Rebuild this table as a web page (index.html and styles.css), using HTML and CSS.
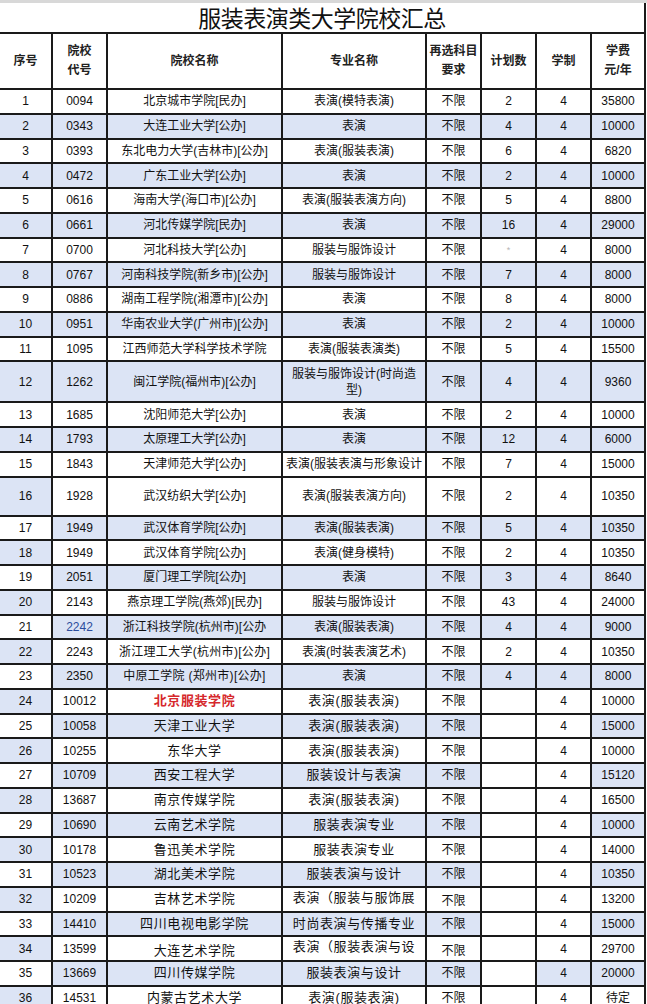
FILE: index.html
```html
<!DOCTYPE html>
<html lang="zh-CN">
<head>
<meta charset="utf-8">
<title>服装表演类大学院校汇总</title>
<link rel="stylesheet" href="styles.css">
</head>
<body>
<div class="band"></div>
<table class="sheet">
  <colgroup>
    <col class="c-seq"><col class="c-code"><col class="c-name"><col class="c-major">
    <col class="c-req"><col class="c-plan"><col class="c-dur"><col class="c-fee">
  </colgroup>
  <thead>
    <tr class="title"><th colspan="8">服装表演类大学院校汇总</th></tr>
    <tr class="head">
      <th>序号</th><th>院校<br>代号</th><th>院校名称</th><th>专业名称</th>
      <th>再选科目<br>要求</th><th>计划数</th><th>学制</th><th>学费<br>元/年</th>
    </tr>
  </thead>
  <tbody>
    <tr><td>1</td><td>0094</td><td>北京城市学院[民办]</td><td>表演(模特表演)</td><td>不限</td><td>2</td><td>4</td><td>35800</td></tr>
    <tr class="a"><td>2</td><td>0343</td><td>大连工业大学[公办]</td><td>表演</td><td>不限</td><td>4</td><td>4</td><td>10000</td></tr>
    <tr><td>3</td><td>0393</td><td>东北电力大学(吉林市)[公办]</td><td>表演(服装表演)</td><td>不限</td><td>6</td><td>4</td><td>6820</td></tr>
    <tr class="a"><td>4</td><td>0472</td><td>广东工业大学[公办]</td><td>表演</td><td>不限</td><td>2</td><td>4</td><td>10000</td></tr>
    <tr><td>5</td><td>0616</td><td>海南大学(海口市)[公办]</td><td>表演(服装表演方向)</td><td>不限</td><td>5</td><td>4</td><td>8800</td></tr>
    <tr class="a"><td>6</td><td>0661</td><td>河北传媒学院[民办]</td><td>表演</td><td>不限</td><td>16</td><td>4</td><td>29000</td></tr>
    <tr><td>7</td><td>0700</td><td>河北科技大学[公办]</td><td>服装与服饰设计</td><td>不限</td><td><span class="mark">*</span></td><td>4</td><td>8000</td></tr>
    <tr class="a"><td>8</td><td>0767</td><td>河南科技学院(新乡市)[公办]</td><td>服装与服饰设计</td><td>不限</td><td>7</td><td>4</td><td>8000</td></tr>
    <tr><td>9</td><td>0886</td><td>湖南工程学院(湘潭市)[公办]</td><td>表演</td><td>不限</td><td>8</td><td>4</td><td>8000</td></tr>
    <tr class="a"><td>10</td><td>0951</td><td>华南农业大学(广州市)[公办]</td><td>表演</td><td>不限</td><td>2</td><td>4</td><td>10000</td></tr>
    <tr><td>11</td><td>1095</td><td>江西师范大学科学技术学院</td><td>表演(服装表演类)</td><td>不限</td><td>5</td><td>4</td><td>15500</td></tr>
    <tr class="a tall-a"><td>12</td><td>1262</td><td>闽江学院(福州市)[公办]</td><td class="two">服装与服饰设计(时尚造<br>型)</td><td>不限</td><td>4</td><td>4</td><td>9360</td></tr>
    <tr><td>13</td><td>1685</td><td>沈阳师范大学[公办]</td><td>表演</td><td>不限</td><td>2</td><td>4</td><td>10000</td></tr>
    <tr class="a"><td>14</td><td>1793</td><td>太原理工大学[公办]</td><td>表演</td><td>不限</td><td>12</td><td>4</td><td>6000</td></tr>
    <tr><td>15</td><td>1843</td><td>天津师范大学[公办]</td><td class="clip">表演(服装表演与形象设计</td><td>不限</td><td>7</td><td>4</td><td>15000</td></tr>
    <tr class="b tall-b"><td>16</td><td>1928</td><td>武汉纺织大学[公办]</td><td>表演(服装表演方向)</td><td>不限</td><td>2</td><td>4</td><td>10350</td></tr>
    <tr class="c"><td>17</td><td>1949</td><td>武汉体育学院[公办]</td><td>表演(服装表演)</td><td>不限</td><td>5</td><td>4</td><td>10350</td></tr>
    <tr class="b"><td>18</td><td>1949</td><td>武汉体育学院[公办]</td><td>表演(健身模特)</td><td>不限</td><td>2</td><td>4</td><td>10350</td></tr>
    <tr class="c"><td>19</td><td>2051</td><td>厦门理工学院[公办]</td><td>表演</td><td>不限</td><td>3</td><td>4</td><td>8640</td></tr>
    <tr class="b"><td>20</td><td>2143</td><td>燕京理工学院(燕郊)[民办]</td><td>服装与服饰设计</td><td>不限</td><td>43</td><td>4</td><td>24000</td></tr>
    <tr class="c"><td>21</td><td class="blue">2242</td><td>浙江科技学院(杭州市)[公办</td><td>表演(服装表演)</td><td>不限</td><td>4</td><td>4</td><td>9000</td></tr>
    <tr class="b"><td>22</td><td>2243</td><td class="wide">浙江理工大学(杭州市)[公办]</td><td>表演(时装表演艺术)</td><td>不限</td><td>2</td><td>4</td><td>10350</td></tr>
    <tr class="c"><td>23</td><td>2350</td><td class="wide">中原工学院 (郑州市)[公办]</td><td>表演</td><td>不限</td><td>4</td><td>4</td><td>8000</td></tr>
    <tr class="b l"><td>24</td><td>10012</td><td class="red">北京服装学院</td><td>表演(服装表演)</td><td>不限</td><td></td><td>4</td><td>10000</td></tr>
    <tr class="d l"><td>25</td><td>10058</td><td>天津工业大学</td><td>表演(服装表演)</td><td>不限</td><td></td><td>4</td><td>15000</td></tr>
    <tr class="b l"><td>26</td><td>10255</td><td>东华大学</td><td>表演(服装表演)</td><td>不限</td><td></td><td>4</td><td>10000</td></tr>
    <tr class="d l"><td>27</td><td>10709</td><td>西安工程大学</td><td>服装设计与表演</td><td>不限</td><td></td><td>4</td><td>15120</td></tr>
    <tr class="b l"><td>28</td><td>13687</td><td>南京传媒学院</td><td>表演(服装表演)</td><td>不限</td><td></td><td>4</td><td>16500</td></tr>
    <tr class="d l"><td>29</td><td>10690</td><td>云南艺术学院</td><td>服装表演专业</td><td>不限</td><td></td><td>4</td><td>10000</td></tr>
    <tr class="b l"><td>30</td><td>10178</td><td>鲁迅美术学院</td><td>服装表演专业</td><td>不限</td><td></td><td>4</td><td>14000</td></tr>
    <tr class="d l"><td>31</td><td>10523</td><td>湖北美术学院</td><td>服装表演与设计</td><td>不限</td><td></td><td>4</td><td>10350</td></tr>
    <tr class="b l"><td>32</td><td>10209</td><td>吉林艺术学院</td><td class="up">表演（服装与服饰展</td><td class="down">不限</td><td></td><td>4</td><td>13200</td></tr>
    <tr class="d l"><td>33</td><td>14410</td><td>四川电视电影学院</td><td>时尚表演与传播专业</td><td>不限</td><td></td><td>4</td><td>15000</td></tr>
    <tr class="b l"><td>34</td><td>13599</td><td class="down">大连艺术学院</td><td class="up">表演（服装表演与设</td><td class="down">不限</td><td></td><td>4</td><td>29700</td></tr>
    <tr class="d e l"><td>35</td><td>13669</td><td>四川传媒学院</td><td>服装表演与设计</td><td>不限</td><td></td><td>4</td><td>20000</td></tr>
    <tr class="b l"><td>36</td><td>14531</td><td>内蒙古艺术大学</td><td>表演(服装表演)</td><td>不限</td><td></td><td>4</td><td class="cjk">待定</td></tr>
  </tbody>
</table>
</body>
</html>
```
FILE: styles.css
```css
* { box-sizing: border-box; }

body {
  margin: 0;
  background: #ffffff;
  color: #111111;
  font-family: "Liberation Sans", "Noto Sans CJK SC", sans-serif;
}

.band {
  height: 3px;
  background: #d8d8d8;
}

.sheet {
  border-collapse: collapse;
  table-layout: fixed;
  width: 645px;
}

.c-seq { width: 52px; }
.c-code { width: 55px; }
.c-name { width: 175px; }
.c-major { width: 144px; }
.c-req { width: 55px; }
.c-plan { width: 55px; }
.c-dur { width: 55px; }
.c-fee { width: 54px; }

.sheet th,
.sheet td {
  border: 2px solid #1a1a1a;
  padding: 0 1px;
  text-align: center;
  vertical-align: middle;
  font-size: 12px;
  line-height: 16px;
  font-weight: normal;
  white-space: nowrap;
  overflow: hidden;
}

.sheet tr > :first-child { border-left: none; }

.title th {
  height: 29px;
  border-top: none;
  border-left: none;
  font-size: 23px;
  line-height: 26px;
  letter-spacing: -0.5px;
  color: #111;
  padding-top: 3px;
}

.head th {
  height: 56px;
  font-weight: bold;
  line-height: 19px;
  color: #222;
}

tbody tr { height: 24.75px; }
tbody tr.tall-a { height: 41px; }
tbody tr.tall-b { height: 39px; }

/* shading patterns */
tr.a td,
tr.b td:first-child,
tr.c td:not(:first-child),
tr.d td:nth-child(2),
tr.d td:nth-child(3),
tr.d td:nth-child(4),
tr.d td:nth-child(5),
tr.d td:nth-child(8),
tr.e td:nth-child(7) {
  background: #dce4f5;
}

.two { line-height: 18px; }

.clip {
  text-align: left;
  padding-left: 1px;
}

.wide { letter-spacing: 0.3px; }

.mark {
  color: #b5b5b5;
  font-size: 9px;
  vertical-align: top;
}

.blue { color: #2b4c9c; }

tr.l td:nth-child(3),
tr.l td:nth-child(4) {
  font-size: 13px;
  letter-spacing: 0.6px;
}

tr.l td.red {
  color: #d6282c;
  font-weight: bold;
}

.sheet td.up { padding-bottom: 3px; }
.sheet td.down { padding-top: 4px; }

.cjk { font-size: 13px; }
```
